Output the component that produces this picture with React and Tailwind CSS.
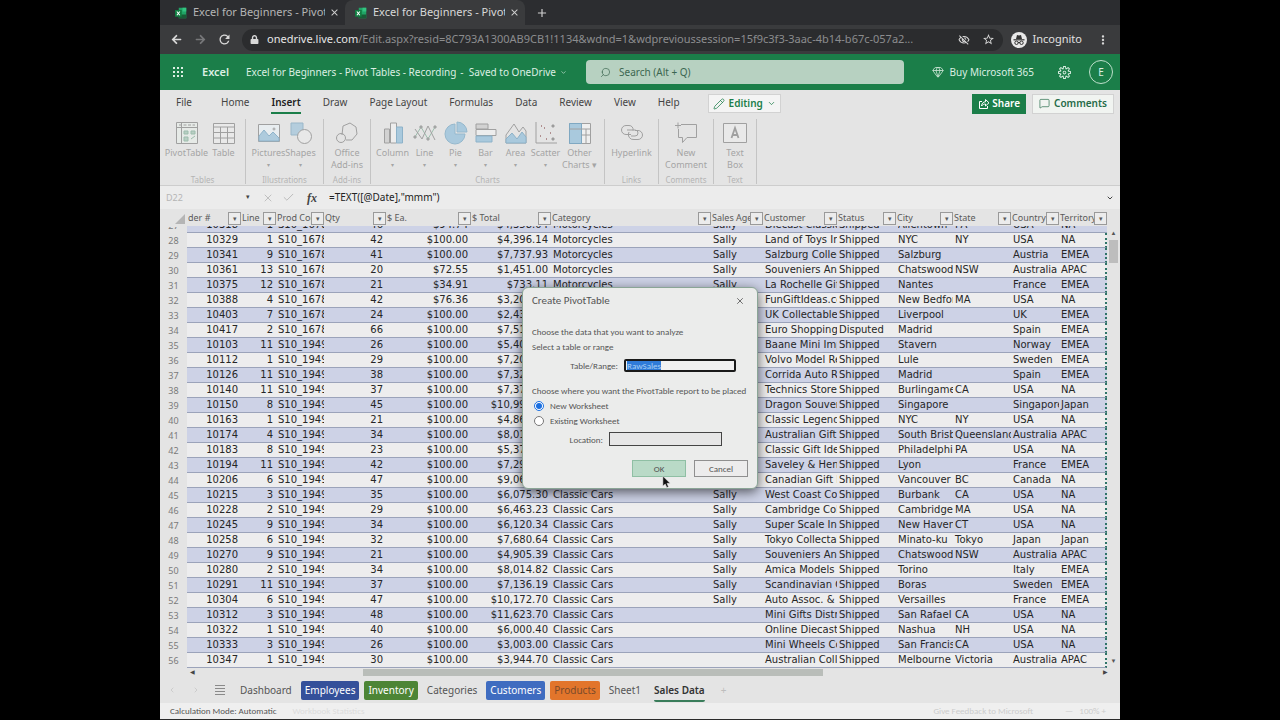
import React, { useEffect, useRef, useState } from "react";
import { FaLock, FaArrowLeft, FaArrowRight } from "react-icons/fa";
import { MdRefresh, MdOutlineVisibilityOff, MdStarBorder, MdMoreVert, MdClose, MdAdd } from "react-icons/md";
import { VscSettingsGear } from "react-icons/vsc";
import { ChevronDown, ChevronLeft, ChevronRight, Check, X, Search, Pencil, MessageSquare, Gem } from "lucide-react";

const columns = [
  { key: "order", label: "der #", width: "w-[54px]", align: "text-right" },
  { key: "line", label: "Line", width: "w-[35px]", align: "text-right" },
  { key: "prod", label: "Prod Code", width: "w-[48px]", align: "text-left" },
  { key: "qty", label: "Qty", width: "w-[62px]", align: "text-right" },
  { key: "each", label: "$ Ea.", width: "w-[85px]", align: "text-right" },
  { key: "total", label: "$ Total", width: "w-[80px]", align: "text-right" },
  { key: "category", label: "Category", width: "w-[160px]", align: "text-left" },
  { key: "agent", label: "Sales Agent", width: "w-[52px]", align: "text-left" },
  { key: "customer", label: "Customer", width: "w-[74px]", align: "text-left" },
  { key: "status", label: "Status", width: "w-[59px]", align: "text-left" },
  { key: "city", label: "City", width: "w-[57px]", align: "text-left" },
  { key: "state", label: "State", width: "w-[58px]", align: "text-left" },
  { key: "country", label: "Country", width: "w-[48px]", align: "text-left" },
  { key: "territory", label: "Territory", width: "", align: "text-left" },
];

const M = "Motorcycles";
const C = "Classic Cars";

// row number followed by one value per column
const rows = [
  [28, "10329", 1, "S10_1678", 42, "$100.00", "$4,396.14", M, "Sally", "Land of Toys Inc.", "Shipped", "NYC", "NY", "USA", "NA"],
  [29, "10341", 9, "S10_1678", 41, "$100.00", "$7,737.93", M, "Sally", "Salzburg Collectables", "Shipped", "Salzburg", "", "Austria", "EMEA"],
  [30, "10361", 13, "S10_1678", 20, "$72.55", "$1,451.00", M, "Sally", "Souveniers And Things", "Shipped", "Chatswood", "NSW", "Australia", "APAC"],
  [31, "10375", 12, "S10_1678", 21, "$34.91", "$733.11", M, "Sally", "La Rochelle Gifts", "Shipped", "Nantes", "", "France", "EMEA"],
  [32, "10388", 4, "S10_1678", 42, "$76.36", "$3,207.12", M, "Sally", "FunGiftIdeas.com", "Shipped", "New Bedford", "MA", "USA", "NA"],
  [33, "10403", 7, "S10_1678", 24, "$100.00", "$2,434.56", M, "Sally", "UK Collectables", "Shipped", "Liverpool", "", "UK", "EMEA"],
  [34, "10417", 2, "S10_1678", 66, "$100.00", "$7,516.08", M, "Sally", "Euro Shopping Channel", "Disputed", "Madrid", "", "Spain", "EMEA"],
  [35, "10103", 11, "S10_1949", 26, "$100.00", "$5,404.62", C, "Sally", "Baane Mini Imports", "Shipped", "Stavern", "", "Norway", "EMEA"],
  [36, "10112", 1, "S10_1949", 29, "$100.00", "$7,209.11", C, "Sally", "Volvo Model Replicas", "Shipped", "Lule", "", "Sweden", "EMEA"],
  [37, "10126", 11, "S10_1949", 38, "$100.00", "$7,329.06", C, "Sally", "Corrida Auto Replicas", "Shipped", "Madrid", "", "Spain", "EMEA"],
  [38, "10140", 11, "S10_1949", 37, "$100.00", "$7,374.10", C, "Sally", "Technics Stores Inc.", "Shipped", "Burlingame", "CA", "USA", "NA"],
  [39, "10150", 8, "S10_1949", 45, "$100.00", "$10,993.50", C, "Sally", "Dragon Souveniers", "Shipped", "Singapore", "", "Singapore", "Japan"],
  [40, "10163", 1, "S10_1949", 21, "$100.00", "$4,860.24", C, "Sally", "Classic Legends Inc.", "Shipped", "NYC", "NY", "USA", "NA"],
  [41, "10174", 4, "S10_1949", 34, "$100.00", "$8,014.82", C, "Sally", "Australian Gift Network", "Shipped", "South Brisbane", "Queensland", "Australia", "APAC"],
  [42, "10183", 8, "S10_1949", 23, "$100.00", "$5,372.57", C, "Sally", "Classic Gift Ideas", "Shipped", "Philadelphia", "PA", "USA", "NA"],
  [43, "10194", 11, "S10_1949", 42, "$100.00", "$7,290.36", C, "Sally", "Saveley & Henriot", "Shipped", "Lyon", "", "France", "EMEA"],
  [44, "10206", 6, "S10_1949", 47, "$100.00", "$9,064.89", C, "Sally", "Canadian Gift Exchange", "Shipped", "Vancouver", "BC", "Canada", "NA"],
  [45, "10215", 3, "S10_1949", 35, "$100.00", "$6,075.30", C, "Sally", "West Coast Collectables", "Shipped", "Burbank", "CA", "USA", "NA"],
  [46, "10228", 2, "S10_1949", 29, "$100.00", "$6,463.23", C, "Sally", "Cambridge Collectables", "Shipped", "Cambridge", "MA", "USA", "NA"],
  [47, "10245", 9, "S10_1949", 34, "$100.00", "$6,120.34", C, "Sally", "Super Scale Inc.", "Shipped", "New Haven", "CT", "USA", "NA"],
  [48, "10258", 6, "S10_1949", 32, "$100.00", "$7,680.64", C, "Sally", "Tokyo Collectables", "Shipped", "Minato-ku", "Tokyo", "Japan", "Japan"],
  [49, "10270", 9, "S10_1949", 21, "$100.00", "$4,905.39", C, "Sally", "Souveniers And Things", "Shipped", "Chatswood", "NSW", "Australia", "APAC"],
  [50, "10280", 2, "S10_1949", 34, "$100.00", "$8,014.82", C, "Sally", "Amica Models & Co.", "Shipped", "Torino", "", "Italy", "EMEA"],
  [51, "10291", 11, "S10_1949", 37, "$100.00", "$7,136.19", C, "Sally", "Scandinavian Gift Ideas", "Shipped", "Boras", "", "Sweden", "EMEA"],
  [52, "10304", 6, "S10_1949", 47, "$100.00", "$10,172.70", C, "Sally", "Auto Assoc. & Cie.", "Shipped", "Versailles", "", "France", "EMEA"],
  [53, "10312", 3, "S10_1949", 48, "$100.00", "$11,623.70", C, "", "Mini Gifts Distributors", "Shipped", "San Rafael", "CA", "USA", "NA"],
  [54, "10322", 1, "S10_1949", 40, "$100.00", "$6,000.40", C, "", "Online Diecast Creations", "Shipped", "Nashua", "NH", "USA", "NA"],
  [55, "10333", 3, "S10_1949", 26, "$100.00", "$3,003.00", C, "", "Mini Wheels Co.", "Shipped", "San Francisco", "CA", "USA", "NA"],
  [56, "10347", 1, "S10_1949", 30, "$100.00", "$3,944.70", C, "", "Australian Collectors", "Shipped", "Melbourne", "Victoria", "Australia", "APAC"],
];

// scrolled half under the header
const clippedRow = [27, "10318", 1, "S10_1678", 46, "$94.74", "$4,358.04", M, "Sally", "Diecast Classics Inc.", "Shipped", "Allentown", "PA", "USA", "NA"];

const ExcelLogo = () => (
  <svg viewBox="0 0 16 16" className="w-3 h-3 shrink-0">
    <path d="M5 1h10v14H5z" fill="#21a366" />
    <path d="M10 1h5v5h-5z" fill="#33c481" />
    <path d="M5 10h10v5H5z" fill="#185c37" />
    <path d="M0 4h9v9H0z" fill="#107c41" />
    <path d="M2.500 6l4 5M6.500 6l-4 5" stroke="#fff" strokeWidth="1.400" />
  </svg>
);

const BrowserTab = ({ active }) => (
  <div className={active ? "flex items-center w-[180px] pl-[10px] bg-[#3a3b3d] rounded-t-lg text-[#d8d8d8]" : "flex items-center w-[185px] pl-[15px] text-[#b5b5b5]"}>
    <ExcelLogo />
    <span className="ml-[6px] w-[132px] overflow-hidden whitespace-nowrap text-[11px]">Excel for Beginners - Pivot Tables</span>
    <button aria-label="Close tab" className="ml-1 text-[#d0d0d0]"><MdClose size={11} /></button>
  </div>
);

const BrowserBar = () => (
  <header className="bg-[#2c2d30]">
    <div className="flex h-[25px]">
      <BrowserTab />
      <BrowserTab active />
      <button aria-label="New tab" className="ml-[10px] text-[#cfcfcf]"><MdAdd size={14} /></button>
    </div>
    <div className="flex items-center h-[29px] pl-2 pr-[10px] bg-[#3a3b3d] text-[#d8d8d8]">
      <button aria-label="Back" className="w-6"><FaArrowLeft size={11} className="ml-[3px]" /></button>
      <button aria-label="Forward" className="w-6 text-[#77787a]"><FaArrowRight size={11} className="ml-[3px]" /></button>
      <button aria-label="Reload" className="w-6"><MdRefresh size={15} className="ml-px" /></button>
      <div className="flex flex-1 min-w-0 items-center h-[22px] ml-[2px] pl-2 pr-2 rounded-full bg-[#2b2c2e]">
        <FaLock size={9} className="shrink-0" />
        <span className="flex-1 min-w-0 ml-2 mr-3 overflow-hidden whitespace-nowrap text-[11px] text-[#8b8c8e]">
          <span className="text-[#e6e6e6]">onedrive.live.com</span>/Edit.aspx?resid=8C793A1300AB9CB1!1134&amp;wdnd=1&amp;wdprevioussession=15f9c3f3-3aac-4b14-b67c-057a2...
        </span>
        <MdOutlineVisibilityOff size={12} className="shrink-0" />
        <MdStarBorder size={13} className="shrink-0 ml-3" />
      </div>
      <svg viewBox="0 0 16 16" className="w-4 h-4 ml-2 shrink-0">
        <circle cx="8" cy="8" r="8" fill="#e8e8e8" />
        <path d="M5 7l1-4 2 .5L10 3l1 4z" fill="#333" />
        <path d="M2.500 7.800h11" stroke="#333" strokeWidth="1.200" />
        <circle cx="5.500" cy="10.800" r="1.700" fill="none" stroke="#333" />
        <circle cx="10.500" cy="10.800" r="1.700" fill="none" stroke="#333" />
        <path d="M7 10.500h2" stroke="#333" />
      </svg>
      <span className="ml-[6px] text-[11px] text-[#e0e0e0]">Incognito</span>
      <button aria-label="Browser menu" className="ml-[14px]"><MdMoreVert size={14} /></button>
    </div>
  </header>
);

const TitleBar = () => (
  <div className="flex items-center h-9 pl-3 pr-[7px] bg-[#1b7e49] text-[#dcefe3] text-[10px]">
    <button aria-label="App launcher">
      <svg viewBox="0 0 12 12" className="w-3 h-3" fill="currentColor">
        {[1, 5, 9].map((y) => [1, 5, 9].map((x) => <rect key={`${x}-${y}`} x={x} y={y} width="2" height="2" />))}
      </svg>
    </button>
    <span className="w-[62px] pl-[18px] text-[11px] font-semibold">Excel</span>
    <button className="flex items-center w-[340px] whitespace-nowrap">
      <span>Excel for Beginners - Pivot Tables - Recording</span>
      <span className="ml-1">- &nbsp;Saved to OneDrive</span>
      <ChevronDown size={7} className="ml-1" />
    </button>
    <label className="flex flex-1 min-w-0 items-center h-6 pl-[14px] rounded-sm bg-[#b7d1c1] text-[#3c6650]">
      <Search size={11} strokeWidth={1.5} className="-scale-x-100" />
      <input aria-label="Search" placeholder="Search (Alt + Q)" className="flex-1 min-w-0 ml-2 bg-transparent outline-none placeholder:text-[#3c6650]" />
    </label>
    <button className="flex items-center ml-7 whitespace-nowrap">
      <Gem size={12} strokeWidth={1.5} />
      <span className="ml-[6px]">Buy Microsoft 365</span>
    </button>
    <button aria-label="Settings" className="ml-6"><VscSettingsGear size={13} /></button>
    <button className="w-6 h-6 ml-[18px] rounded-full border border-[#bfe0cc]">E</button>
  </div>
);

const ShareIcon = () => (
  <svg viewBox="0 0 12 12" className="w-3 h-3" fill="none" stroke="currentColor">
    <path d="M4 3.500H1.500v7h8V8" />
    <path d="M3.500 8c.3-3 2-4.200 4-4.200V1.500l3.500 3.300-3.500 3.200V6C6 6 4.700 6.500 3.500 8z" />
  </svg>
);

const MenuBar = () => (
  <nav className="flex items-center h-[25px] pl-4 pt-[2px] pr-[6px] text-[10px] text-[#444]">
    <div className="flex gap-[22px]">
      {["File", "Home", "Insert", "Draw", "Page Layout", "Formulas", "Data", "Review", "View", "Help"].map((name) => (
        <button
          key={name}
          className={
            name === "Insert"
              ? "h-5 border-b-2 border-[#1b7e49] font-semibold text-[#222] whitespace-nowrap"
              : "h-5 border-b-2 border-transparent whitespace-nowrap first:mr-[7px]"
          }
        >
          {name}
        </button>
      ))}
    </div>
    <button className="flex items-center h-[19px] ml-7 px-1 border border-[#d2d2d2] bg-[#f4f4f4] font-semibold text-[#1b7e49]">
      <Pencil size={12} strokeWidth={1.5} />
      <span className="ml-1">Editing</span>
      <ChevronDown size={9} className="ml-1" />
    </button>
    <div className="flex gap-[6px] ml-auto font-semibold">
      <button className="flex items-center h-5 px-[6px] bg-[#1b7e49] text-white">
        <ShareIcon />
        <span className="ml-[2px]">Share</span>
      </button>
      <button className="flex items-center h-5 px-[6px] border border-[#d2d2d2] bg-[#f1f4f1] text-[#256b48]">
        <MessageSquare size={11} strokeWidth={1.5} />
        <span className="ml-1">Comments</span>
      </button>
    </div>
  </nav>
);

const icons = {
  pivot: (
    <>
      <path d="M1.500 1.500h21v21h-21z" fill="#e6eae7" />
      <path d="M1.500 6.500h21M6.500 1.500v21" />
      <path d="M4 4h16" strokeDasharray="3 1.500" />
      <path d="M9 10h4v3H9zM9 16h4v4H9zM16 10h4v3h-4zM16 18l4-3" fill="#b9cfc4" stroke="#9dbdad" />
    </>
  ),
  table: <path d="M1.500 2.500h21v20h-21zM1.500 6h21M1.500 11.500h21M1.500 17h21M8.500 6v16.500M15.500 6v16.500" fill="#e9e9e9" />,
  pictures: (
    <>
      <path d="M1.500 3.500h21v17h-21z" fill="#e8edf0" />
      <path d="M2 20V15l5-6 5 6 4-4 6 6v3z" fill="#aecbdd" stroke="#8fb3ca" />
      <circle cx="17" cy="8" r="1" />
    </>
  ),
  shapes: (
    <>
      <path d="M2 2h12v12H2z" fill="#b4cddd" stroke="#9ab7c9" />
      <circle cx="15.500" cy="15.500" r="7" fill="#e8e8e8" />
    </>
  ),
  addins: (
    <>
      <path d="M7 14L8 5l7-3 6 4 1 7-5 6H11" />
      <circle cx="6" cy="17" r="4.500" />
    </>
  ),
  column: (
    <>
      <path d="M3.500 8h5v14h-5z" fill="#d2d2d2" />
      <path d="M9.500 2h6v20h-6z" fill="#ededed" />
      <path d="M15.500 6h6v16h-6z" fill="#a9c9dd" stroke="#8db2c9" />
    </>
  ),
  line: (
    <>
      <path d="M2 16L8 6l7 12 7-12" stroke="#9dbfae" />
      <path d="M2 8l7 10 6-13 7 14" />
      <path d="M7 5h2v2H7zM14 17h2v2h-2zM1 15h2v2H1zM21 5h2v2h-2z" fill="#a9b8b0" />
    </>
  ),
  pie: (
    <>
      <path d="M11 3a10 10 0 1 0 10 10H11z" fill="#a9c9dd" stroke="#95b8cd" />
      <path d="M13 1a10 10 0 0 1 10 10H13z" fill="#a9c9dd" stroke="#95b8cd" />
    </>
  ),
  bar: (
    <>
      <path d="M2 3h12v5H2z" fill="#d2d2d2" />
      <path d="M2 8.500h20v6H2z" fill="#ededed" />
      <path d="M2 15h16v6H2z" fill="#a9c9dd" stroke="#8db2c9" />
    </>
  ),
  area: (
    <>
      <path d="M2 14L10 3l5 8 4-5 3 4v12H2z" fill="#e4e4e4" />
      <path d="M2 22v-4l6-6 5 6 5-7 4 5v6z" fill="#a9c9dd" stroke="#8db2c9" />
    </>
  ),
  scatter: (
    <>
      <path d="M2 1v21h21" />
      <path d="M6 15h1M10 7h1M12 18h1M16 12h1M7 5h1" stroke="#b08f8f" strokeWidth="2" />
      <path d="M18 4h2v2h-2zM18 17h2v2h-2z" fill="#8f8f8f" />
    </>
  ),
  other: (
    <>
      <path d="M1.500 2.500h21v20h-21z" fill="#efefef" />
      <path d="M1.500 2.500h12v20h-12z" fill="#a9c9dd" stroke="#7fa8c2" />
      <path d="M1.500 8h21M13.500 14h9M18 8v14" />
    </>
  ),
  link: <path d="M13 9.500a4 4 0 0 0-4-5H6a4.500 4.500 0 0 0 0 9h5M9 11a5 5 0 0 0 5 7.500h4a4 4 0 0 0 0-9h-3M7 9h8a3 3 0 0 1 0 6h-4" />,
  comment: <path d="M7 3.500h15.500v13H13l-4.500 5v-5H4.500V8M1 4.500h6M4 1.500v6" />,
  textbox: (
    <>
      <path d="M.5 2.500h23v19H.5z" fill="#e9e9e9" />
      <path d="M8.500 17L12 7l3.500 10M9.500 14h5" strokeWidth="1.800" />
    </>
  ),
};

const ribbonGroups = [
  { name: "Tables", width: "w-[86px]", items: [["pivot", "PivotTable", "w-[42px]"], ["table", "Table", "w-8"]] },
  { name: "Illustrations", width: "w-[78px]", items: [["pictures", "Pictures", "w-8", true], ["shapes", "Shapes", "w-8", true]] },
  { name: "Add-ins", width: "w-[47px]", items: [["addins", "Office Add-ins", "w-9"]] },
  {
    name: "Charts",
    width: "w-[234px]",
    items: [
      ["column", "Column", "w-8", true],
      ["line", "Line", "w-8", true],
      ["pie", "Pie", "w-[30px]", true],
      ["bar", "Bar", "w-[30px]", true],
      ["area", "Area", "w-[30px]", true],
      ["scatter", "Scatter", "w-[30px]", true],
      ["other", "Other Charts ▾", "w-[38px]"],
    ],
  },
  { name: "Links", width: "w-[54px]", items: [["link", "Hyperlink", "w-[42px]"]] },
  { name: "Comments", width: "w-[55px]", items: [["comment", "New Comment", "w-[42px]"]] },
  { name: "Text", width: "w-[43px]", items: [["textbox", "Text Box", "w-7"]] },
];

const Ribbon = () => (
  <div className="flex h-[71px] pt-1 pb-px border-b border-[#cdcdcd]">
    {ribbonGroups.map((group) => (
      <section key={group.name} className={`${group.width} flex flex-col items-center justify-between border-r border-[#c4c4c4] text-[#a5a5a5]`}>
        <div className="flex justify-center">
          {group.items.map(([icon, label, width, drop]) => (
            <button key={icon} className={`${width} flex flex-col items-center pt-[2px] text-[9px] leading-[12px]`}>
              <svg viewBox="0 0 24 24" className="w-6 h-6 mb-[2px]" fill="none" stroke="#a0a0a0">
                {icons[icon]}
              </svg>
              <span>{label}</span>
              {drop && <span className="text-[6px]">▾</span>}
            </button>
          ))}
        </div>
        <span className="text-[8px] leading-[9px] text-[#b4b4b4]">{group.name}</span>
      </section>
    ))}
  </div>
);

const FormulaBar = () => (
  <div className="flex items-center h-[23px] mb-[2px] bg-[#ececec] text-[10px] text-[#444]">
    <label className="flex items-center w-[96px] pl-[6px]">
      <input aria-label="Name box" defaultValue="D22" className="w-[80px] bg-transparent text-[9px] text-[#b5b5b5] outline-none" />
      <span className="text-[7px]">▾</span>
    </label>
    <X size={12} strokeWidth={1.5} className="ml-[6px] text-[#b0b0b0]" />
    <Check size={13} strokeWidth={1.5} className="ml-2 text-[#b0b0b0]" />
    <span className="ml-3 font-[Liberation_Serif,serif] text-[12px] font-bold italic">fx</span>
    <input aria-label="Formula" defaultValue={'=TEXT([@Date],"mmm")'} className="flex-1 ml-3 bg-transparent text-[#222] outline-none" />
    <ChevronDown size={8} strokeWidth={3} className="mr-[6px]" />
  </div>
);

const pad = (align) => (align === "text-right" ? "pr-[3px]" : "pl-[2px]");

const Sheet = () => (
  <div className="flex">
    <div className="flex-1 min-w-0">
      <table className="w-full table-fixed border-separate border-spacing-0 font-[DejaVu_Sans,sans-serif] text-[10px] leading-[14px] text-[#262626]">
        <thead>
          <tr className="h-[15px] font-['Noto_Sans',sans-serif] text-[9px] text-[#5a5a5a]">
            <th className="w-[27px] p-0">
              <svg viewBox="0 0 10 10" className="w-[10px] h-[10px] ml-[15px]" fill="#b5b5b5"><path d="M10 0v10H0z" /></svg>
            </th>
            {columns.map((col) => (
              <th key={col.key} className={`${col.width} p-0 font-normal`}>
                <div className="flex h-[15px]">
                  <span className="flex-1 min-w-0 overflow-hidden whitespace-nowrap pl-px text-left">{col.label}</span>
                  <button aria-label={`Filter ${col.label}`} className="flex shrink-0 items-center justify-center w-[13px] h-[13px] mt-px border border-[#9a9a9a] bg-[#ececec] text-[7px]">▾</button>
                </div>
              </th>
            ))}
          </tr>
        </thead>
        <tbody>
          <tr className="h-[7px]">
            {clippedRow.map((value, i) => (
              <td
                key={i}
                className={i === 0 ? "p-0 text-center font-['Noto_Sans',sans-serif] text-[9px] text-[#7a7a7a]" : `p-0 border-b border-[#9ba3ba] bg-[#cdd2e6] ${columns[i - 1].align} ${pad(columns[i - 1].align)}`}
              >
                <div className="flex flex-col justify-end h-[6px] overflow-hidden whitespace-nowrap"><span>{value}</span></div>
              </td>
            ))}
          </tr>
          {rows.map((row) => {
            const banded = row[0] % 2 === 1;
            return (
              <tr key={row[0]} className={banded ? "h-[15px] bg-[#cdd2e6]" : "h-[15px] bg-[#ededee]"}>
                {row.map((value, i) =>
                  i === 0 ? (
                    <td key={i} className="p-0 bg-[#e4e4e4] text-center font-['Noto_Sans',sans-serif] text-[9px] text-[#7a7a7a]">{value}</td>
                  ) : (
                    <td
                      key={i}
                      className={`p-0 border-b border-[#9ba3ba] overflow-hidden whitespace-nowrap ${columns[i - 1].align} ${pad(columns[i - 1].align)} ${i === row.length - 1 ? "border-r-2 border-r-[#2f7468] [border-right-style:dotted]" : ""}`}
                    >
                      {value}
                    </td>
                  )
                )}
              </tr>
            );
          })}
        </tbody>
      </table>
    </div>
    <div className="flex flex-col justify-between items-center w-[13px] pt-[15px] text-[6px] text-[#555]">
      <div className="flex flex-col items-center">
        <span className="h-[14px] leading-[14px]">▲</span>
        <div className="w-[9px] h-[23px] bg-[#bdbdbd]" />
      </div>
      <span className="leading-[14px]">▼</span>
    </div>
  </div>
);

const sheets = [
  { name: "Dashboard", style: "h-[19px] px-1" },
  { name: "Employees", style: "h-[19px] px-1 bg-[#34509a] text-white" },
  { name: "Inventory", style: "h-[19px] px-1 bg-[#4d8536] text-white" },
  { name: "Categories", style: "h-[19px] px-1" },
  { name: "Customers", style: "h-[19px] px-1 bg-[#3f6cc0] text-white" },
  { name: "Products", style: "h-[19px] px-1 bg-[#e2752b] text-[#7a4a2a]" },
  { name: "Sheet1", style: "h-[19px] px-1" },
  { name: "Sales Data", style: "h-6 ml-1 border-y-2 border-t-transparent border-b-[#3a7d5b] font-semibold text-[#333]" },
];

const SheetTabs = () => (
  <div>
    <div className="flex items-center h-[9px] pl-[30px] pr-[12px] text-[6px] text-[#444]">
      <span>◀</span>
      <div className="flex-1 flex ml-[168px] mr-[10px]"><div className="w-[63%] h-[7px] bg-[#b9bdb9]" /></div>
      <span>▶</span>
    </div>
    <div className="flex items-center h-[26px] pl-2 text-[10px] text-[#555]">
      <ChevronLeft size={8} className="text-[#c0c0c0]" />
      <ChevronRight size={8} className="ml-4 text-[#c0c0c0]" />
      <svg viewBox="0 0 10 10" className="w-[10px] h-[10px] ml-[15px]" stroke="#8a8a8a"><path d="M0 .5h10M0 3.500h10M0 6.500h10M0 9.500h10" /></svg>
      <div className="flex items-center gap-[5px] ml-[11px]">
        {sheets.map((sheet) => (
          <button key={sheet.name} className={`${sheet.style} rounded-xs whitespace-nowrap`}>{sheet.name}</button>
        ))}
      </div>
      <button aria-label="Add sheet" className="ml-4 text-[#bdbdbd]">+</button>
    </div>
  </div>
);

const StatusBar = () => (
  <footer className="flex flex-1 items-center px-[10px] bg-[#efefef] font-[Carlito,Lato,sans-serif] text-[9px] leading-[12px] text-[#555]">
    <span>Calculation Mode: Automatic</span>
    <span className="ml-4 text-[#dcdcdc]">Workbook Statistics</span>
    <span className="ml-auto text-[#cccccc]">Give Feedback to Microsoft</span>
    <span className="ml-8 mr-1 text-[#cccccc]">— &nbsp; 100% +</span>
  </footer>
);

const PivotDialog = () => {
  const rangeRef = useRef(null);
  const [target, setTarget] = useState("new");

  useEffect(() => {
    rangeRef.current.focus();
    rangeRef.current.select();
  }, []);

  return (
    <div
      role="dialog"
      aria-label="Create PivotTable"
      className="absolute top-[287px] left-1/2 -translate-x-1/2 w-[236px] h-[202px] px-[9px] pt-[5px] rounded-md border border-[#8aa596] bg-[#ebeceb] shadow-[0_3px_12px_rgba(0,0,0,0.6)] font-[Carlito,Lato,sans-serif] text-[9px] leading-[15px] text-[#555]"
    >
      <div className="flex items-center justify-between h-[15px]">
        <h2 className="text-[11px]">Create PivotTable</h2>
        <button aria-label="Close"><X size={10} strokeWidth={2} className="mr-[3px]" /></button>
      </div>
      <p className="mt-4">Choose the data that you want to analyze</p>
      <p>Select a table or range</p>
      <div className="flex items-center h-[14px] mt-1">
        <label htmlFor="range" className="w-[92px] pr-[6px] text-right">Table/Range:</label>
        <input
          id="range"
          ref={rangeRef}
          defaultValue="RawSales"
          className="w-[112px] h-[13px] px-px rounded-xs border-2 border-[#1a1a1a] bg-[#f1f1f1] outline-none selection:bg-[#2f7bd8] selection:text-[#a9d0f5]"
        />
      </div>
      <p className="mt-[11px] whitespace-nowrap">Choose where you want the PivotTable report to be placed</p>
      <label className="flex items-center">
        <input type="radio" name="target" checked={target === "new"} onChange={() => setTarget("new")} className="w-[10px] h-[10px] ml-[2px] mr-[6px] accent-[#1a6fe0]" />
        New Worksheet
      </label>
      <label className="flex items-center">
        <input type="radio" name="target" checked={target === "existing"} onChange={() => setTarget("existing")} className="w-[10px] h-[10px] ml-[2px] mr-[6px] accent-[#1a6fe0]" />
        Existing Worksheet
      </label>
      <div className="flex items-center h-[14px] mt-1">
        <label htmlFor="location" className="w-[77px] pr-[6px] text-right">Location:</label>
        <input id="location" className="w-[113px] h-[14px] border border-[#444] bg-[#e6e6e6] outline-none" />
      </div>
      <div className="flex justify-end gap-2 mt-[14px]">
        <button className="w-[54px] h-[17px] border border-[#8fbfa4] bg-[#b9dac7] leading-[14px]">OK</button>
        <button className="w-[54px] h-[17px] border border-[#8f8f8f] bg-[#ececec] leading-[14px]">Cancel</button>
      </div>
      <svg viewBox="0 0 10 15" className="absolute top-[187px] left-[139px] w-[9px] h-[14px]">
        <path d="M1 1v11l2.600-2.300 1.800 4 1.800-.8-1.700-3.900H9z" fill="#111" stroke="#ddd" strokeWidth=".6" />
      </svg>
    </div>
  );
};

const App = () => (
  <div className="min-h-screen bg-black font-['Noto_Sans',sans-serif]">
    <div className="relative flex flex-col w-3/4 min-h-screen mx-auto bg-[#e4e4e4] border-b border-[#2b2b2b]">
      <BrowserBar />
      <TitleBar />
      <MenuBar />
      <Ribbon />
      <FormulaBar />
      <Sheet />
      <SheetTabs />
      <StatusBar />
      <PivotDialog />
    </div>
  </div>
);

export default App;
